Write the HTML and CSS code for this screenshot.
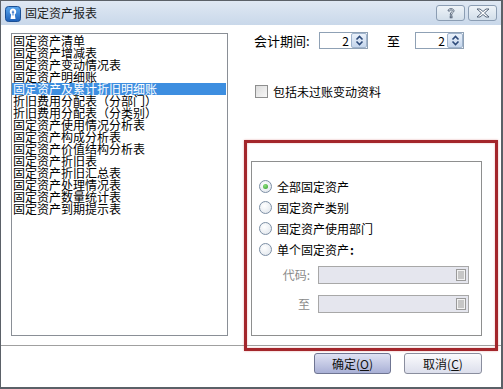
FILE: index.html
```html
<!DOCTYPE html>
<html lang="zh-CN">
<head>
    <meta charset="UTF-8">
    <title>固定资产报表</title>
    <link rel="stylesheet" href="styles.css">
</head>
<body>
<div class="window">
    <div class="titlebar">
        <svg class="app-icon" width="16" height="16" viewBox="0 0 16 16">
            <defs>
                <linearGradient id="ig" x1="0" y1="0" x2="0" y2="1">
                    <stop offset="0" stop-color="#5aa7ee"/>
                    <stop offset="1" stop-color="#1c5fb8"/>
                </linearGradient>
            </defs>
            <rect x="0.5" y="0.5" width="15" height="15" rx="3" fill="url(#ig)" stroke="#1a4f95"/>
            <path d="M8 2.5c-2 0-3.2 1.4-3.2 3.2 0 1.3.7 2.2 1.4 2.8L5.5 13h5l-.7-4.5c.7-.6 1.4-1.5 1.4-2.8 0-1.8-1.2-3.2-3.2-3.2z" fill="#fff"/>
            <path d="M8 4.5v5M6.8 6.2h2.4" stroke="#2a6fc5" stroke-width="1"/>
        </svg>
        <span class="title">固定资产报表</span>
        <div class="caption-buttons">
            <span class="cap-btn">
                <svg width="10" height="12" viewBox="0 0 10 12"><path d="M2 3.8C2 1 8 1 8 3.8c0 1.8-2.3 1.9-2.3 3.7V8H4.3v-.7C4.3 5.2 6.5 4.9 6.5 3.8c0-1.2-3-1.2-3 .4z" fill="#fff" stroke="#4a5a70" stroke-width="0.9"/><rect x="4.2" y="9" width="1.8" height="1.8" fill="#fff" stroke="#4a5a70" stroke-width="0.9"/></svg>
            </span>
            <span class="cap-btn">
                <svg width="14" height="10" viewBox="0 0 14 10"><path d="M1 1h3l3 2.5L10 1h3L8.5 5 13 9h-3L7 6.5 4 9H1l4.5-4z" fill="#fff" stroke="#4a5a70" stroke-width="0.9"/></svg>
            </span>
        </div>
    </div>

    <div class="client">
        <div class="main">
            <ul class="report-list">
                <li>固定资产清单</li>
                <li>固定资产增减表</li>
                <li>固定资产变动情况表</li>
                <li>固定资产明细账</li>
                <li class="selected">固定资产及累计折旧明细账</li>
                <li>折旧费用分配表（分部门）</li>
                <li>折旧费用分配表（分类别）</li>
                <li>固定资产使用情况分析表</li>
                <li>固定资产构成分析表</li>
                <li>固定资产价值结构分析表</li>
                <li>固定资产折旧表</li>
                <li>固定资产折旧汇总表</li>
                <li>固定资产处理情况表</li>
                <li>固定资产数量统计表</li>
                <li>固定资产到期提示表</li>
            </ul>

            <div class="options">
                <div class="period-row">
                    <span class="period-label">会计期间:</span>
                    <div class="spin">
                        <span class="spin-value">2</span>
                        <span class="spin-btn">
                            <svg width="9" height="11" viewBox="0 0 9 11"><path d="M1.5 4.5L4.5 1.5 7.5 4.5M1.5 6.5L4.5 9.5 7.5 6.5" fill="none" stroke="#2d4a7a" stroke-width="1.6"/></svg>
                        </span>
                    </div>
                    <span class="period-to">至</span>
                    <div class="spin">
                        <span class="spin-value">2</span>
                        <span class="spin-btn">
                            <svg width="9" height="11" viewBox="0 0 9 11"><path d="M1.5 4.5L4.5 1.5 7.5 4.5M1.5 6.5L4.5 9.5 7.5 6.5" fill="none" stroke="#2d4a7a" stroke-width="1.6"/></svg>
                        </span>
                    </div>
                </div>

                <div class="check-row">
                    <span class="checkbox"></span>
                    <span>包括未过账变动资料</span>
                </div>

                <div class="group-box">
                    <div class="radio-row"><span class="radio checked"></span><span>全部固定资产</span></div>
                    <div class="radio-row"><span class="radio"></span><span>固定资产类别</span></div>
                    <div class="radio-row"><span class="radio"></span><span>固定资产使用部门</span></div>
                    <div class="radio-row"><span class="radio"></span><span>单个固定资产<b class="colon">:</b></span></div>

                    <div class="range-grid">
                        <span class="range-label">代码:</span>
                        <div class="lookup">
                            <svg width="10" height="12" viewBox="0 0 10 12"><rect x="0.5" y="0.5" width="9" height="11" fill="#f2f2f2" stroke="#9a9a9a"/><path d="M2 3h6M2 5h6M2 7h6M2 9h6" stroke="#9a9a9a"/></svg>
                        </div>
                        <span class="range-label">至</span>
                        <div class="lookup">
                            <svg width="10" height="12" viewBox="0 0 10 12"><rect x="0.5" y="0.5" width="9" height="11" fill="#f2f2f2" stroke="#9a9a9a"/><path d="M2 3h6M2 5h6M2 7h6M2 9h6" stroke="#9a9a9a"/></svg>
                        </div>
                    </div>
                </div>
            </div>
        </div>

        <div class="separator"></div>

        <div class="footer">
            <span class="btn btn-default">确定(<u>O</u>)</span>
            <span class="btn">取消(<u>C</u>)</span>
        </div>
    </div>

    <!-- red annotation frame over the dialog -->
    <div class="mark-box"></div>
</div>
</body>
</html>
```

FILE: styles.css
```css
body {
    margin: 0;
    background: #fff;
    font-family: "Noto Sans CJK SC", "Liberation Sans", sans-serif;
    font-size: 12px;
    color: #000;
}

.window {
    position: relative;
    width: 503px;
    height: 389px;
    box-sizing: border-box;
    border: 1px solid #5b6168;
    border-right-width: 2px;
    border-bottom-width: 2px;
    background: #fff;
    overflow: hidden;
}

.titlebar {
    height: 24px;
    display: flex;
    align-items: center;
    padding-left: 4px;
    background: linear-gradient(#dfe8f3, #c9d8ea);
}

.app-icon {
    display: block;
    margin-top: 1px;
}

.title {
    margin-left: 4px;
    font-size: 12px;
    line-height: 14px;
    color: #1c1c1c;
}

.caption-buttons {
    margin-left: auto;
    margin-right: 4px;
    display: flex;
    gap: 3px;
    align-self: flex-start;
    margin-top: 4px;
}

.cap-btn {
    width: 29px;
    height: 16px;
    box-sizing: border-box;
    border: 1px solid #8b9db3;
    border-radius: 3px;
    background: linear-gradient(#eef3f8, #d2deea);
    display: flex;
    align-items: center;
    justify-content: center;
}

.cap-btn svg {
    display: block;
}

.client {
    background: #fff;
}

.main {
    display: flex;
    padding: 7px 0 0 10px;
}

.report-list {
    list-style: none;
    margin: 1px 0 0 0;
    padding: 1px 1px 0 0;
    width: 217px;
    height: 303px;
    box-sizing: border-box;
    border: 1px solid #8a8f96;
}

.report-list li {
    height: 12px;
    line-height: 12px;
    font-size: 12px;
    padding-left: 1px;
    white-space: nowrap;
}

.report-list li.selected {
    background: #3d8ee0;
    color: #fff;
}

.options {
    margin-left: 23px;
    width: 231px;
}

.period-row {
    display: flex;
    align-items: center;
    height: 17px;
    padding-left: 3px;
}

.period-label {
    font-size: 13px;
    width: 65px;
}

.period-to {
    font-size: 13px;
    margin: 0 15px 0 19px;
}

.spin {
    width: 49px;
    height: 17px;
    box-sizing: border-box;
    border: 1px solid #8fa1b5;
    display: flex;
    align-items: center;
}

.spin-value {
    flex: 1;
    text-align: right;
    padding-right: 2px;
    font-size: 12px;
    line-height: 15px;
}

.spin-btn {
    width: 16px;
    height: 15px;
    box-sizing: border-box;
    border: 1px solid #9fb3cc;
    border-radius: 2px;
    background: linear-gradient(#eaf1fa, #c5d6ec);
    display: flex;
    align-items: center;
    justify-content: center;
}

.spin-btn svg {
    display: block;
}

.check-row {
    display: flex;
    align-items: center;
    margin-top: 35px;
    padding-left: 4px;
    height: 14px;
    gap: 5px;
}

.checkbox {
    width: 13px;
    height: 13px;
    box-sizing: border-box;
    border: 1px solid #8e8f8f;
    background: linear-gradient(135deg, #dcdcdc, #f8f8f8);
}

.group-box {
    margin-top: 63px;
    width: 231px;
    height: 175px;
    box-sizing: border-box;
    border: 1px solid #8e8f8f;
    padding: 14px 0 0 7px;
}

.radio-row {
    display: flex;
    align-items: center;
    height: 21px;
    gap: 5px;
}

.radio {
    width: 13px;
    height: 13px;
    box-sizing: border-box;
    border: 1px solid #7d8fa5;
    border-radius: 50%;
    background: radial-gradient(circle at 40% 35%, #ffffff, #dde3ea);
    display: flex;
    align-items: center;
    justify-content: center;
}

.radio.checked::after {
    content: "";
    width: 5px;
    height: 5px;
    border-radius: 50%;
    background: radial-gradient(circle at 40% 35%, #8ee07f, #2f9a2a);
}

.colon {
    margin-left: 1px;
}

.range-grid {
    display: grid;
    grid-template-columns: 66px 151px;
    grid-auto-rows: 18px;
    row-gap: 11px;
    margin: 6px 0 0 -7px;
}

.range-label {
    text-align: right;
    padding-right: 8px;
    color: #8a8a8a;
    line-height: 18px;
}

.lookup {
    box-sizing: border-box;
    border: 1px solid #a8a8a8;
    background: #e5e6ee;
    display: flex;
    align-items: center;
    justify-content: flex-end;
    padding-right: 2px;
}

.lookup svg {
    display: block;
}

.separator {
    margin-top: 9px;
    height: 1px;
    background: #a0a0a0;
    border-bottom: 1px solid #fff;
}

.footer {
    display: flex;
    justify-content: flex-end;
    gap: 13px;
    padding: 6px 19px 0 0;
}

.btn {
    width: 78px;
    height: 21px;
    box-sizing: border-box;
    border: 1px solid #8a8e9e;
    border-radius: 3px;
    background: linear-gradient(#fbfbfd, #dcdfec);
    display: flex;
    align-items: center;
    justify-content: center;
    font-size: 12px;
    color: #111;
}

.btn-default {
    width: 77px;
    border-color: #6f7592;
    background: linear-gradient(#dfe2f3, #a9b0d6);
}

.mark-box {
    position: absolute;
    left: 243px;
    top: 139px;
    width: 254px;
    height: 211px;
    box-sizing: border-box;
    border: 3px solid #a3262b;
    box-shadow: 0 0 2px rgba(200, 60, 60, 0.4), inset 0 0 2px rgba(200, 60, 60, 0.4);
}
```
